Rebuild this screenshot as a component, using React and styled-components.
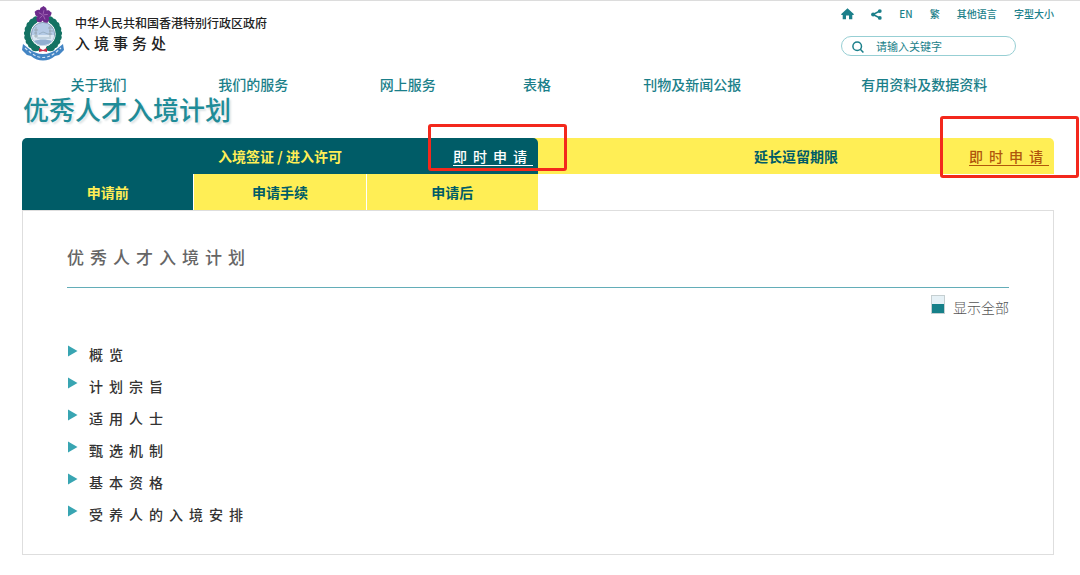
import React from 'react';
import styled, { createGlobalStyle, css } from 'styled-components';

const teal = '#1b7f8a';
const deepTeal = '#005c67';
const yellow = '#ffee55';

const GlobalStyle = createGlobalStyle`
  *, *::before, *::after { box-sizing: border-box; }
  body {
    margin: 0;
    background: #fff;
    color: #333;
    font-family: "Noto Sans CJK SC", "Noto Sans", sans-serif;
    font-size: 14px;
    overflow-x: hidden;
  }
  a { color: inherit; text-decoration: none; }
  h1, h2, ul { margin: 0; padding: 0; }
  ul { list-style: none; }
`;

const Page = styled.div`
  border-top: 1px solid #dcdcdc;
  padding: 0 26px 20px 22px;
`;

const Header = styled.header`
  display: flex;
  justify-content: space-between;
  align-items: flex-start;
  height: 71px;
`;

const Brand = styled.a`
  display: flex;
  gap: 10px;
  padding-top: 5px;
  color: #222;
`;

const BrandText = styled.span`
  display: flex;
  flex-direction: column;
  padding-top: 7px;
  font-weight: 500;
`;

const Government = styled.span`
  font-size: 12px;
  line-height: 20px;
`;

const Department = styled.span`
  font-size: 15px;
  line-height: 20px;
  letter-spacing: 4px;
`;

const Tools = styled.div`
  display: flex;
  flex-direction: column;
  width: 213px;
  padding-top: 5px;
  gap: 14px;
  color: ${teal};
`;

const Utilities = styled.nav`
  display: flex;
  align-items: center;
  justify-content: space-between;
  height: 16px;
  font-size: 10px;
  font-weight: 500;
  line-height: 16px;
  a { display: flex; }
`;

const SearchBox = styled.label`
  display: flex;
  align-items: center;
  gap: 12px;
  width: 175px;
  height: 20px;
  padding: 0 10px;
  border: 1px solid #97cfd4;
  border-radius: 10px;
  svg { flex: none; margin-top: 2px; }
`;

const SearchInput = styled.input`
  flex: 1;
  min-width: 0;
  padding: 0;
  border: 0;
  outline: 0;
  background: none;
  color: ${teal};
  font: 11px/16px "Noto Sans CJK SC", sans-serif;
  &::placeholder { color: ${teal}; opacity: 1; }
`;

const MainNav = styled.nav`
  position: relative;
  z-index: 1;
  display: grid;
  grid-template-columns: 153fr 156fr 153fr 105fr 205fr 259fr;
  background: #fff;
  color: ${teal};
  font-weight: 500;
  line-height: 24px;
  text-align: center;
`;

const PageTitle = styled.h1`
  padding: 0 1px 16px;
  color: #1f8c98;
  font-size: 26px;
  font-weight: 500;
  line-height: 26px;
  text-shadow: 2px 2px 2px #dde4e6;
`;

const tone = css`
  background: ${(p) => (p.$active ? deepTeal : yellow)};
  color: ${(p) => (p.$active ? yellow : deepTeal)};
`;

const Tabs = styled.div`
  display: grid;
  grid-template-columns: 1fr 1fr;
  background: linear-gradient(${yellow}, ${yellow}) center / 20px 100% no-repeat;
`;

const Tab = styled.div`
  ${tone}
  position: relative;
  display: grid;
  grid-template-columns: 1fr auto 1fr;
  align-items: center;
  height: 36px;
  padding: 0 5px;
  border-radius: ${(p) => (p.$active ? '5px 5px 0 0' : '0 5px 0 0')};
  font-weight: 700;
`;

const TabLink = styled.a`
  grid-column: 2;
`;

const ApplyLink = styled.a`
  justify-self: end;
  color: ${(p) => (p.$active ? '#fff' : '#b0560c')};
  font-weight: 500;
  letter-spacing: 6px;
  text-decoration: underline;
  text-decoration-thickness: 1px;
  text-underline-offset: 3px;
`;

const Marker = styled.span`
  position: absolute;
  z-index: 2;
  top: ${(p) => (p.$tall ? '-22px' : '-14px')};
  right: ${(p) => (p.$tall ? '-25px' : '-29px')};
  width: 139px;
  height: ${(p) => (p.$tall ? '62px' : '47px')};
  border: 3px solid #f3281c;
  border-radius: 3px;
  pointer-events: none;
`;

const Steps = styled.nav`
  display: grid;
  grid-template-columns: repeat(3, 1fr);
  gap: 1px;
  width: 50%;
`;

const Step = styled.a`
  ${tone}
  height: 36px;
  line-height: 36px;
  font-weight: 700;
  text-align: center;
`;

const Panel = styled.main`
  padding: 31px 44px 23px;
  border: 1px solid #dedede;
`;

const SectionTitle = styled.h2`
  padding-bottom: 15px;
  border-bottom: 1px solid #63adb8;
  color: #666;
  font-size: 17px;
  font-weight: 500;
  line-height: 30px;
  letter-spacing: 6px;
`;

const ShowAll = styled.button`
  display: flex;
  align-items: flex-start;
  gap: 8px;
  margin: 7px 0 20px auto;
  padding: 0;
  border: 0;
  background: none;
  color: #555;
  font: 300 14px/24px "Noto Sans CJK SC", sans-serif;
  cursor: pointer;
`;

const Topic = styled.a`
  display: flex;
  gap: 11px;
  line-height: 30px;
  padding-bottom: 2px;
  color: #333;
  font-weight: 500;
  letter-spacing: 6px;
  svg { flex: none; margin-top: 6px; }
`;

const petals = [0, 72, 144, 216, 288];
const leaves = [0, 1, 2, 3, 4, 5, 6, 7, 8];

const Emblem = () => (
  <svg width="43" height="55" viewBox="0 0 43 55" aria-hidden="true">
    <g fill="#147263">
      {leaves.map((i) => {
        const a = ((118 + i * 15) * Math.PI) / 180;
        const x = Math.cos(a) * 15.5;
        const y = 28 + Math.sin(a) * 16;
        const d = 118 + i * 15;
        return (
          <g key={i}>
            <ellipse cx={21 + x} cy={y} rx="4.4" ry="3" transform={`rotate(${d + 62} ${21 + x} ${y})`} />
            <ellipse cx={21 - x} cy={y} rx="4.4" ry="3" transform={`rotate(${-d - 62} ${21 - x} ${y})`} />
          </g>
        );
      })}
    </g>
    <circle cx="21" cy="28" r="12.6" fill="#fff" />
    <circle cx="21" cy="28" r="11.6" fill="#b5cbe6" stroke="#65839f" strokeWidth=".7" />
    <path d="M10 29h22a11 11 0 0 1-22 0z" fill="#dce8f3" />
    <path d="M12 35c5-2 13-2 18 0-3 5-14 6-18 0z" fill="#91afd2" />
    <path d="M12 24h4M12 27h3M12 30h4M26 22h4M27 25h4M26 28h4M14 21v11M28 20v11" stroke="#8f9da3" strokeWidth=".7" />
    <path d="M17 28l4-2 5 2M15 32h14" stroke="#8ba3b8" strokeWidth=".7" fill="none" />
    <path d="M1 38l5 4c9 8 21 8 30 0l5-4 1 6-5 5-4 1c-7 6-17 6-24 0l-4-1-5-5z" fill="#4385c4" />
    <path d="M3 42l6 5c8 6 16 6 24 0l6-5" fill="none" stroke="#d2e3f3" strokeWidth="1.2" strokeDasharray="3 2" />
    <path d="M17 42l4 2 4-2v4l-4-1-4 1z" fill="#c92d4c" />
    <g fill="#6d2b8c">
      {petals.map((r) => (
        <path key={r} transform={`rotate(${r + 4} 21 9)`} d="M21 9.6C17.5 7 16.7 3.3 18.4 1.7 19.4 1 20 1.1 20.7 0c1.5.6 3.8 1.6 3.7 4.2C24.3 6.4 22.7 8.3 21 9.6z" />
      ))}
    </g>
    <g stroke="#ba82c7" strokeWidth=".6">
      {petals.map((r) => (
        <path key={r} transform={`rotate(${r + 4} 21 9)`} d="M21 8.4L21.6 4.2" />
      ))}
    </g>
  </svg>
);

const HomeIcon = () => (
  <svg width="13" height="12" viewBox="0 0 13 12" fill={teal} aria-hidden="true">
    <path d="M6.5.3L13 6.2l-.7.8h-1v4.2H8V7.6H5v3.6H1.7V7h-1L0 6.2z" />
  </svg>
);

const ShareIcon = () => (
  <svg width="11" height="11" viewBox="0 0 11 11" aria-hidden="true">
    <path d="M8.8 2L2 5.5 8.8 9" fill="none" stroke={teal} strokeWidth="1.5" />
    <g fill={teal}>
      <circle cx="8.8" cy="2.1" r="1.9" />
      <circle cx="2.1" cy="5.5" r="2" />
      <circle cx="8.8" cy="8.9" r="1.9" />
    </g>
  </svg>
);

const SearchIcon = () => (
  <svg width="12" height="12" viewBox="0 0 12 12" fill="none" stroke={teal} strokeWidth="1.5" aria-hidden="true">
    <circle cx="5.2" cy="5.2" r="4.3" />
    <path d="M8.3 8.3l3.1 3.2" />
  </svg>
);

const ToggleIcon = () => (
  <svg width="14" height="19" viewBox="0 0 14 19" aria-hidden="true">
    <rect x=".5" y=".5" width="13" height="18" fill="#e6f1f6" stroke="#c5cfd1" />
    <rect x="1" y="9" width="12" height="9" fill="#168089" />
  </svg>
);

const Arrow = () => (
  <svg width="11" height="12" viewBox="0 0 11 12" aria-hidden="true">
    <path d="M1 .5L10.5 6 1 11.5z" fill="#38a5b2" />
  </svg>
);

const navItems = ['关于我们', '我们的服务', '网上服务', '表格', '刊物及新闻公报', '有用资料及数据资料'];
const steps = ['申请前', '申请手续', '申请后'];
const topics = ['概览', '计划宗旨', '适用人士', '甄选机制', '基本资格', '受养人的入境安排'];

export default function App() {
  return (
    <>
      <GlobalStyle />
      <Page lang="zh-Hans">
        <Header>
          <Brand href="#">
            <Emblem />
            <BrandText>
              <Government>中华人民共和国香港特别行政区政府</Government>
              <Department>入境事务处</Department>
            </BrandText>
          </Brand>
          <Tools>
            <Utilities>
              <a href="#home" aria-label="主页"><HomeIcon /></a>
              <a href="#share" aria-label="分享"><ShareIcon /></a>
              <a href="#en">EN</a>
              <a href="#hant">繁</a>
              <a href="#languages">其他语言</a>
              <a href="#size">字型大小</a>
            </Utilities>
            <SearchBox>
              <SearchIcon />
              <SearchInput type="search" aria-label="请输入关键字" placeholder="请输入关键字" />
            </SearchBox>
          </Tools>
        </Header>
        <MainNav>
          {navItems.map((item) => <a key={item} href="#nav">{item}</a>)}
        </MainNav>
        <PageTitle>优秀人才入境计划</PageTitle>
        <Tabs>
          <Tab $active>
            <TabLink href="#visa">入境签证 / 进入许可</TabLink>
            <ApplyLink $active href="#apply-visa">即时申请</ApplyLink>
            <Marker />
          </Tab>
          <Tab>
            <TabLink href="#extension">延长逗留期限</TabLink>
            <ApplyLink href="#apply-extension">即时申请</ApplyLink>
            <Marker $tall />
          </Tab>
        </Tabs>
        <Steps>
          {steps.map((step, i) => <Step key={step} href="#step" $active={i === 0}>{step}</Step>)}
        </Steps>
        <Panel>
          <SectionTitle>优秀人才入境计划</SectionTitle>
          <ShowAll type="button"><ToggleIcon />显示全部</ShowAll>
          <ul>
            {topics.map((topic) => (
              <li key={topic}><Topic href="#topic"><Arrow />{topic}</Topic></li>
            ))}
          </ul>
        </Panel>
      </Page>
    </>
  );
}
